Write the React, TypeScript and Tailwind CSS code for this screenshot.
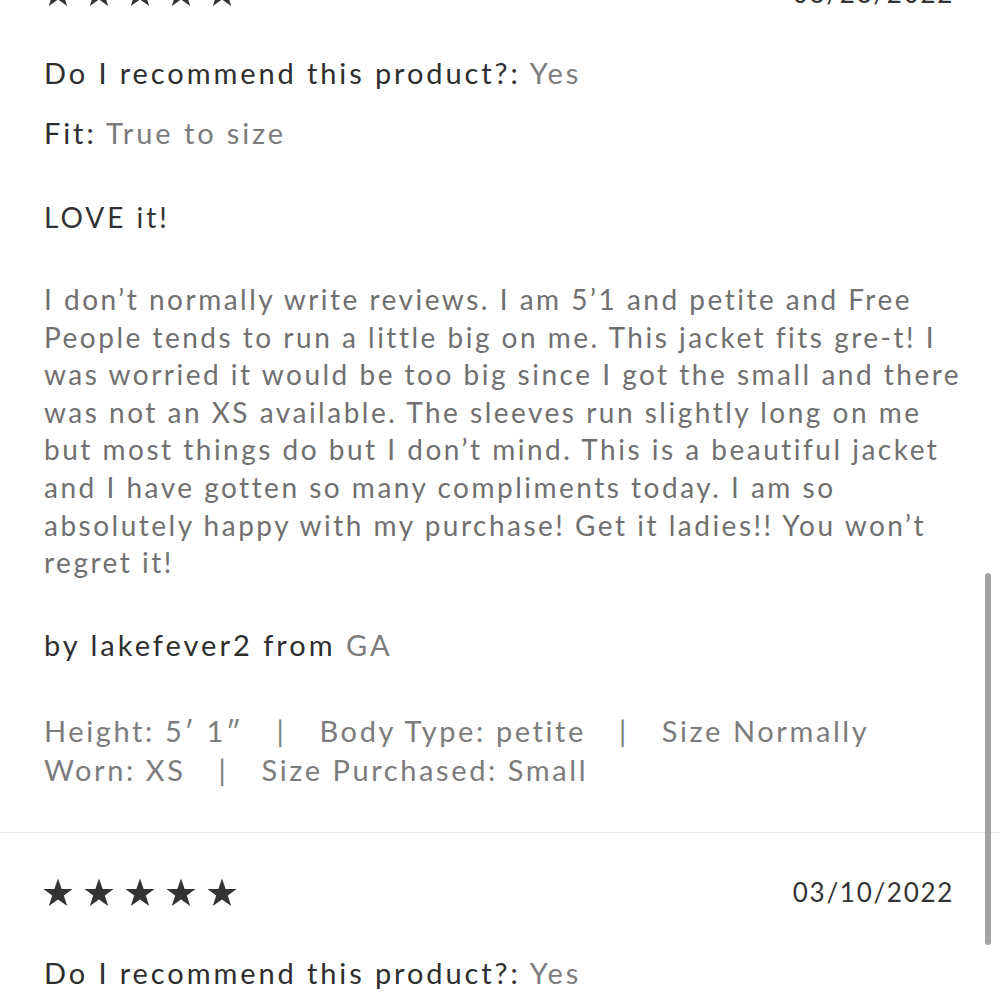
import React from "react";

const Star = () => (
  <svg width="34" height="34" viewBox="0 0 24 24" className="fill-[#333]">
    <path d="M12 1.8l2.6 7.3h7.7l-6.2 4.6 2.4 7.4L12 16.6l-6.5 4.5 2.4-7.4L1.7 9.1h7.7z" />
  </svg>
);

function Header({ date }: { date: string }) {
  return (
    <div className="flex h-[40px] items-center justify-between">
      <div className="flex gap-[7px] -ml-[3px]">
        {[0, 1, 2, 3, 4].map((i) => (
          <Star key={i} />
        ))}
      </div>
      <span className="text-[26px] tracking-[1.7px] text-[#333]">{date}</span>
    </div>
  );
}

function Line({ label, value }: { label: string; value: string }) {
  return (
    <p className="text-[29px] leading-[40px] tracking-[2.9px] text-[#2e2e2e]">
      {label}: <span className="text-[#7c7c7c]">{value}</span>
    </p>
  );
}

const Sep = () => <span className="mx-[33px]">|</span>;

export default function App() {
  return (
    <div className="relative h-screen overflow-hidden bg-white font-['Lato','Open_Sans',sans-serif]">
      <div className="-mt-[27px]">
        <section className="px-[44px] pr-[46px] pb-[43px]">
          <Header date="03/23/2022" />
          <div className="mt-[40px]">
            <Line label="Do I recommend this product?" value="Yes" />
          </div>
          <div className="mt-[20px]">
            <Line label="Fit" value="True to size" />
          </div>
          <h3 className="mt-[44px] text-[28px] leading-[40px] tracking-[3px] text-[#333]">LOVE it!</h3>
          <p className="mt-[44px] -mr-[12px] text-[28px] leading-[37.6px] tracking-[2.5px] text-[#707070]">
            I don’t normally write reviews. I am 5’1 and petite and Free People tends to run a little big on me. This jacket
            fits gre-t! I was worried it would be too big since I got the small and there was not an XS available. The sleeves
            run slightly long on me but most things do but I don’t mind. This is a beautiful jacket and I have gotten so many
            compliments today. I am so absolutely happy with my purchase! Get it ladies!! You won’t regret it!
          </p>
          <p className="mt-[43px] text-[29px] leading-[40px] tracking-[3px] text-[#2e2e2e]">
            by lakefever2 from <span className="text-[#7c7c7c]">GA</span>
          </p>
          <p className="mt-[46px] text-[29px] leading-[39px] tracking-[2.6px] text-[#7c7c7c]">
            Height: 5′ 1″<Sep />Body Type: petite<Sep />Size Normally Worn: XS<Sep />Size Purchased: Small
          </p>
        </section>
        <div className="h-px bg-[#ebe9e6]" />
        <section className="px-[44px] pr-[46px] pt-[40px] pb-[43px]">
          <Header date="03/10/2022" />
          <div className="mt-[40px]">
            <Line label="Do I recommend this product?" value="Yes" />
          </div>
          <div className="mt-[20px]">
            <Line label="Fit" value="True to size" />
          </div>
        </section>
      </div>
      <div className="absolute right-[9px] top-[573px] h-[372px] w-[6px] rounded-full bg-[#a4a4a4]" />
    </div>
  );
}
